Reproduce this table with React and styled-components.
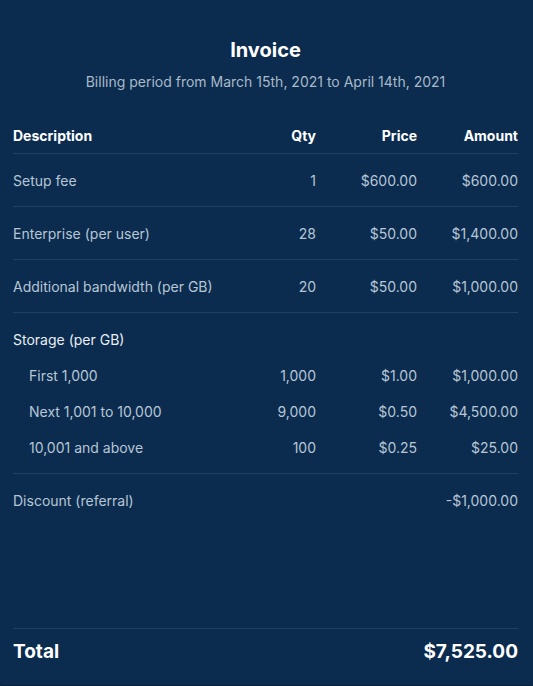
import React from "react";
import styled, { createGlobalStyle } from "styled-components";

const Global = createGlobalStyle`
  html, body { margin: 0; padding: 0; background: #0b2c4e; }
  body { font-family: Inter, "Noto Sans", "Liberation Sans", sans-serif; }
  * { box-sizing: border-box; }
`;

const Card = styled.div`
  height: 686px;
  background: #0b2c4e;
  border-bottom: 1px solid #08223d;
  border-radius: 0 0 4px 4px;
  padding: 36px 15px 19px 13px;
  display: flex;
  flex-direction: column;
  color: #b7c6d6;
  font-size: 14px;
  line-height: 20px;
`;

const Title = styled.h1`
  margin: 0;
  text-align: center;
  font-size: 20px;
  line-height: 28px;
  font-weight: 700;
  color: #ffffff;
`;

const Subtitle = styled.p`
  margin: 8px 0 34px;
  text-align: center;
  color: #a9b9ca;
`;

const Row = styled.div`
  display: grid;
  grid-template-columns: 1fr 101px 101px 101px;
  padding: ${(p) => p.$pad || "17px 0 15px"};
  border-bottom: ${(p) => (p.$divider ? "1px solid #21405f" : "none")};
  font-weight: ${(p) => (p.$head ? 700 : 400)};
  color: ${(p) => (p.$head ? "#ffffff" : "inherit")};
`;

const Cell = styled.div`
  text-align: ${(p) => (p.$right ? "right" : "left")};
  padding-left: ${(p) => (p.$indent ? "16px" : "0")};
  white-space: nowrap;
`;

const Section = styled.div`
  padding: 17px 0 7px;
  border-bottom: 1px solid #21405f;
`;

const SectionTitle = styled.div`
  color: #e8eef5;
  padding-bottom: 8px;
`;

const Spacer = styled.div`
  flex: 1;
`;

const TotalRow = styled.div`
  display: flex;
  justify-content: space-between;
  border-top: 1px solid #21405f;
  padding-top: 9px;
  font-size: 19px;
  line-height: 28px;
  font-weight: 700;
  color: #ffffff;
`;

const items = [
  ["Setup fee", "1", "$600.00", "$600.00"],
  ["Enterprise (per user)", "28", "$50.00", "$1,400.00"],
  ["Additional bandwidth (per GB)", "20", "$50.00", "$1,000.00"],
];

const storage = [
  ["First 1,000", "1,000", "$1.00", "$1,000.00"],
  ["Next 1,001 to 10,000", "9,000", "$0.50", "$4,500.00"],
  ["10,001 and above", "100", "$0.25", "$25.00"],
];

export default function App() {
  return (
    <>
      <Global />
      <Card>
        <Title>Invoice</Title>
        <Subtitle>Billing period from March 15th, 2021 to April 14th, 2021</Subtitle>
        <Row $head $divider $pad="0 0 7px">
          <Cell>Description</Cell>
          <Cell $right>Qty</Cell>
          <Cell $right>Price</Cell>
          <Cell $right>Amount</Cell>
        </Row>
        {items.map((r) => (
          <Row key={r[0]} $divider>
            <Cell>{r[0]}</Cell>
            <Cell $right>{r[1]}</Cell>
            <Cell $right>{r[2]}</Cell>
            <Cell $right>{r[3]}</Cell>
          </Row>
        ))}
        <Section>
          <SectionTitle>Storage (per GB)</SectionTitle>
          {storage.map((r) => (
            <Row key={r[0]} $pad="8px 0">
              <Cell $indent>{r[0]}</Cell>
              <Cell $right>{r[1]}</Cell>
              <Cell $right>{r[2]}</Cell>
              <Cell $right>{r[3]}</Cell>
            </Row>
          ))}
        </Section>
        <Row>
          <Cell>Discount (referral)</Cell>
          <Cell $right></Cell>
          <Cell $right></Cell>
          <Cell $right>-$1,000.00</Cell>
        </Row>
        <Spacer />
        <TotalRow>
          <span>Total</span>
          <span>$7,525.00</span>
        </TotalRow>
      </Card>
    </>
  );
}
